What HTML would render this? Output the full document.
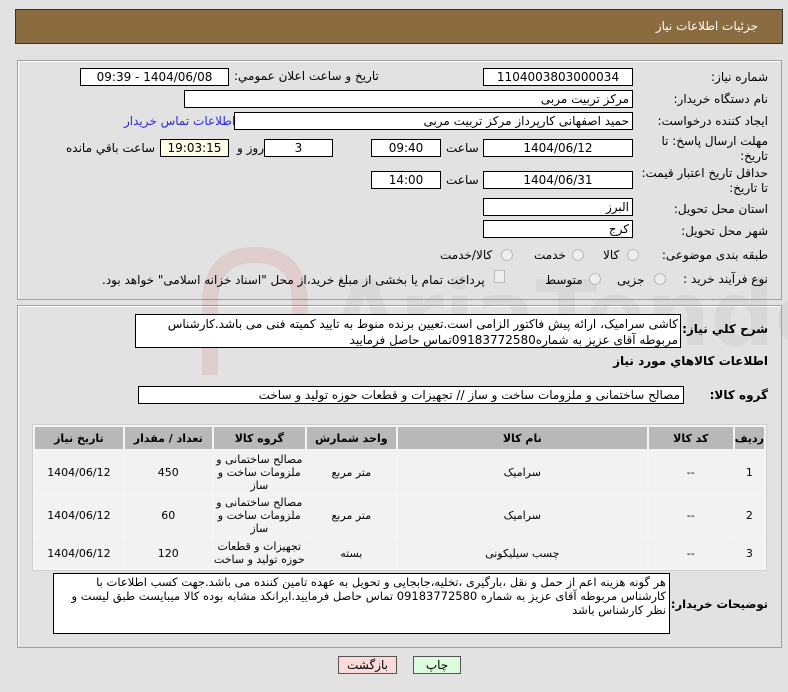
<!DOCTYPE html>
<html><head><meta charset="utf-8"><style>
*{box-sizing:border-box;margin:0;padding:0}
body{width:788px;height:692px;background:#e2e2e2;font-family:"DejaVu Sans","Liberation Sans",sans-serif;font-size:11.5px;color:#000;position:relative;overflow:hidden;direction:rtl}
.a{position:absolute;white-space:nowrap}
.box{position:absolute;background:#fff;border:1px solid #000;height:18px;line-height:16px;text-align:center;font-size:12px}
.r{text-align:right;padding-right:3px}
.lbl{position:absolute;right:20px;text-align:right;font-size:12px}
.panel{position:absolute;left:17px;width:765px;border:1px solid #a0a0a0;box-shadow:inset 1px 1px 0 #fff}
.rad{position:absolute;width:12px;height:12px;border-radius:50%;border:1px solid #bbb;background:#eee}
table{position:absolute;left:32px;top:424px;width:735px;border-collapse:separate;border-spacing:2px;background:#f4f4f4;border:1px solid #d0d0d0}
th{background:#b8b8b8;height:22px;font-size:11px;font-weight:bold}
td{background:#f2f2f2;text-align:center;font-size:11px;line-height:13px}
</style></head><body>
<div class="a" style="left:15px;top:9px;width:768px;height:35px;background:#8b6b40;border:1px solid #333"></div>
<div class="a" style="right:30px;top:19px;color:#fff;font-size:12px">جزئیات اطلاعات نیاز</div>

<div class="panel" style="top:60px;height:240px"></div>
<div class="panel" style="top:305px;height:343px"></div>

<svg class="a" style="left:190px;top:245px" width="600" height="140"><g opacity="0.13"><path d="M20 130 L20 60 Q20 10 65 10 Q110 10 110 60 L110 80" stroke="#c44" stroke-width="16" fill="none"/><text x="140" y="100" font-size="90" font-family="DejaVu Sans" font-weight="bold" fill="#999" direction="ltr">AriaTender.net</text></g></svg>

<div class="lbl" style="top:70px">شماره نیاز:</div>
<div class="box" style="left:483px;top:68px;width:150px">1104003803000034</div>
<div class="a" style="left:234px;top:69px;font-size:12px">تاریخ و ساعت اعلان عمومي:</div>
<div class="box" style="left:80px;top:68px;width:149px">1404/06/08 - 09:39</div>

<div class="lbl" style="top:92px">نام دستگاه خریدار:</div>
<div class="box r" style="left:184px;top:90px;width:449px">مرکز تربیت مربی</div>

<div class="lbl" style="top:114px">ایجاد کننده درخواست:</div>
<div class="box r" style="left:234px;top:112px;width:399px">حمید اصفهانی کارپرداز مرکز تربیت مربی</div>
<div class="a" style="left:124px;top:114px;color:#2a2ae0;font-size:12px">اطلاعات تماس خریدار</div>

<div class="lbl" style="top:134px;line-height:15px">مهلت ارسال پاسخ: تا<br>تاریخ:</div>
<div class="box" style="left:483px;top:139px;width:150px">1404/06/12</div>
<div class="a" style="left:446px;top:141px;font-size:12px">ساعت</div>
<div class="box" style="left:371px;top:139px;width:70px">09:40</div>
<div class="box" style="left:264px;top:139px;width:69px">3</div>
<div class="a" style="left:237px;top:141px;font-size:12px">روز و</div>
<div class="box" style="left:160px;top:139px;width:69px;background:#ffffe8">19:03:15</div>
<div class="a" style="left:66px;top:141px;font-size:12px">ساعت باقي مانده</div>

<div class="lbl" style="top:166px;line-height:15px">حداقل تاریخ اعتبار قیمت:<br>تا تاریخ:</div>
<div class="box" style="left:483px;top:171px;width:150px">1404/06/31</div>
<div class="a" style="left:446px;top:173px;font-size:12px">ساعت</div>
<div class="box" style="left:371px;top:171px;width:70px">14:00</div>

<div class="lbl" style="top:202px">استان محل تحویل:</div>
<div class="box r" style="left:483px;top:198px;width:150px">البرز</div>
<div class="lbl" style="top:224px">شهر محل تحویل:</div>
<div class="box r" style="left:483px;top:220px;width:150px">کرج</div>

<div class="lbl" style="top:248px">طبقه بندی موضوعی:</div>
<div class="rad" style="left:627px;top:249px"></div><div class="a" style="left:603px;top:248px;font-size:12px">کالا</div>
<div class="rad" style="left:572px;top:249px"></div><div class="a" style="left:534px;top:248px;font-size:12px">خدمت</div>
<div class="rad" style="left:501px;top:249px"></div><div class="a" style="left:440px;top:248px;font-size:12px">کالا/خدمت</div>

<div class="lbl" style="top:272px">نوع فرآیند خرید :</div>
<div class="rad" style="left:654px;top:273px"></div><div class="a" style="left:617px;top:273px;font-size:12px">جزیی</div>
<div class="rad" style="left:589px;top:273px"></div><div class="a" style="left:545px;top:273px;font-size:12px">متوسط</div>
<div class="a" style="left:494px;top:270px;width:11px;height:13px;border:1px solid #bbb;background:#eee"></div>
<div class="a" style="left:102px;top:273px;font-size:12px">پرداخت تمام یا بخشی از مبلغ خرید،از محل "اسناد خزانه اسلامی" خواهد بود.</div>

<div class="a" style="right:20px;top:322px;font-weight:bold;font-size:12px">شرح كلي نیاز:</div>
<div class="a" style="left:135px;top:314px;width:546px;height:34px;background:#fff;border:1px solid #000;white-space:normal;text-align:right;padding:1px 2px;font-size:12px;line-height:16px">کاشی سرامیک، ارائه پیش فاکتور الزامی است.تعیین برنده منوط به تایید کمیته فنی می باشد.کارشناس مربوطه آقای عزیز به شماره09183772580تماس حاصل فرمایید</div>
<div class="a" style="right:20px;top:354px;font-weight:bold;font-size:12px">اطلاعات کالاهاي مورد نیاز</div>
<div class="a" style="right:20px;top:388px;font-weight:bold;font-size:12px">گروه کالا:</div>
<div class="box r" style="left:138px;top:386px;width:546px">مصالح ساختمانی و ملزومات ساخت و ساز // تجهیزات و قطعات حوزه تولید و ساخت</div>

<table>
<tr><th style="width:27px">ردیف</th><th style="width:84px">کد کالا</th><th style="width:249px">نام کالا</th><th style="width:89px">واحد شمارش</th><th style="width:91px">گروه کالا</th><th style="width:87px">تعداد / مقدار</th><th>تاریخ نیاز</th></tr>
<tr style="height:42px"><td>1</td><td>--</td><td>سرامیک</td><td>متر مربع</td><td>مصالح ساختمانی و ملزومات ساخت و ساز</td><td>450</td><td>1404/06/12</td></tr>
<tr style="height:41px"><td>2</td><td>--</td><td>سرامیک</td><td>متر مربع</td><td>مصالح ساختمانی و ملزومات ساخت و ساز</td><td>60</td><td>1404/06/12</td></tr>
<tr style="height:30px"><td>3</td><td>--</td><td>چسب سیلیکونی</td><td>بسته</td><td>تجهیزات و قطعات حوزه تولید و ساخت</td><td>120</td><td>1404/06/12</td></tr>
</table>

<div class="a" style="right:20px;top:597px;font-weight:bold;font-size:11.5px">توضیحات خریدار:</div>
<div class="a" style="left:53px;top:573px;width:617px;height:61px;background:#fff;border:1px solid #000;white-space:normal;text-align:right;padding:1px 3px;font-size:11.5px;line-height:14px">هر گونه هزینه اعم از حمل و نقل ،بارگیری ،تخلیه،جابجایی و تحویل به عهده تامین کننده می باشد.جهت کسب اطلاعات با کارشناس مربوطه آقای عزیز به شماره 09183772580 تماس حاصل فرمایید.ایرانکد مشابه بوده کالا میبایست طبق لیست و نظر کارشناس باشد</div>

<div class="a" style="left:338px;top:656px;width:59px;height:18px;background:#fbdada;border:1px solid #555;text-align:center;line-height:16px;font-size:12px">بازگشت</div>
<div class="a" style="left:413px;top:656px;width:48px;height:18px;background:#ddfbdd;border:1px solid #555;text-align:center;line-height:16px;font-size:12px">چاپ</div>
</body></html>
